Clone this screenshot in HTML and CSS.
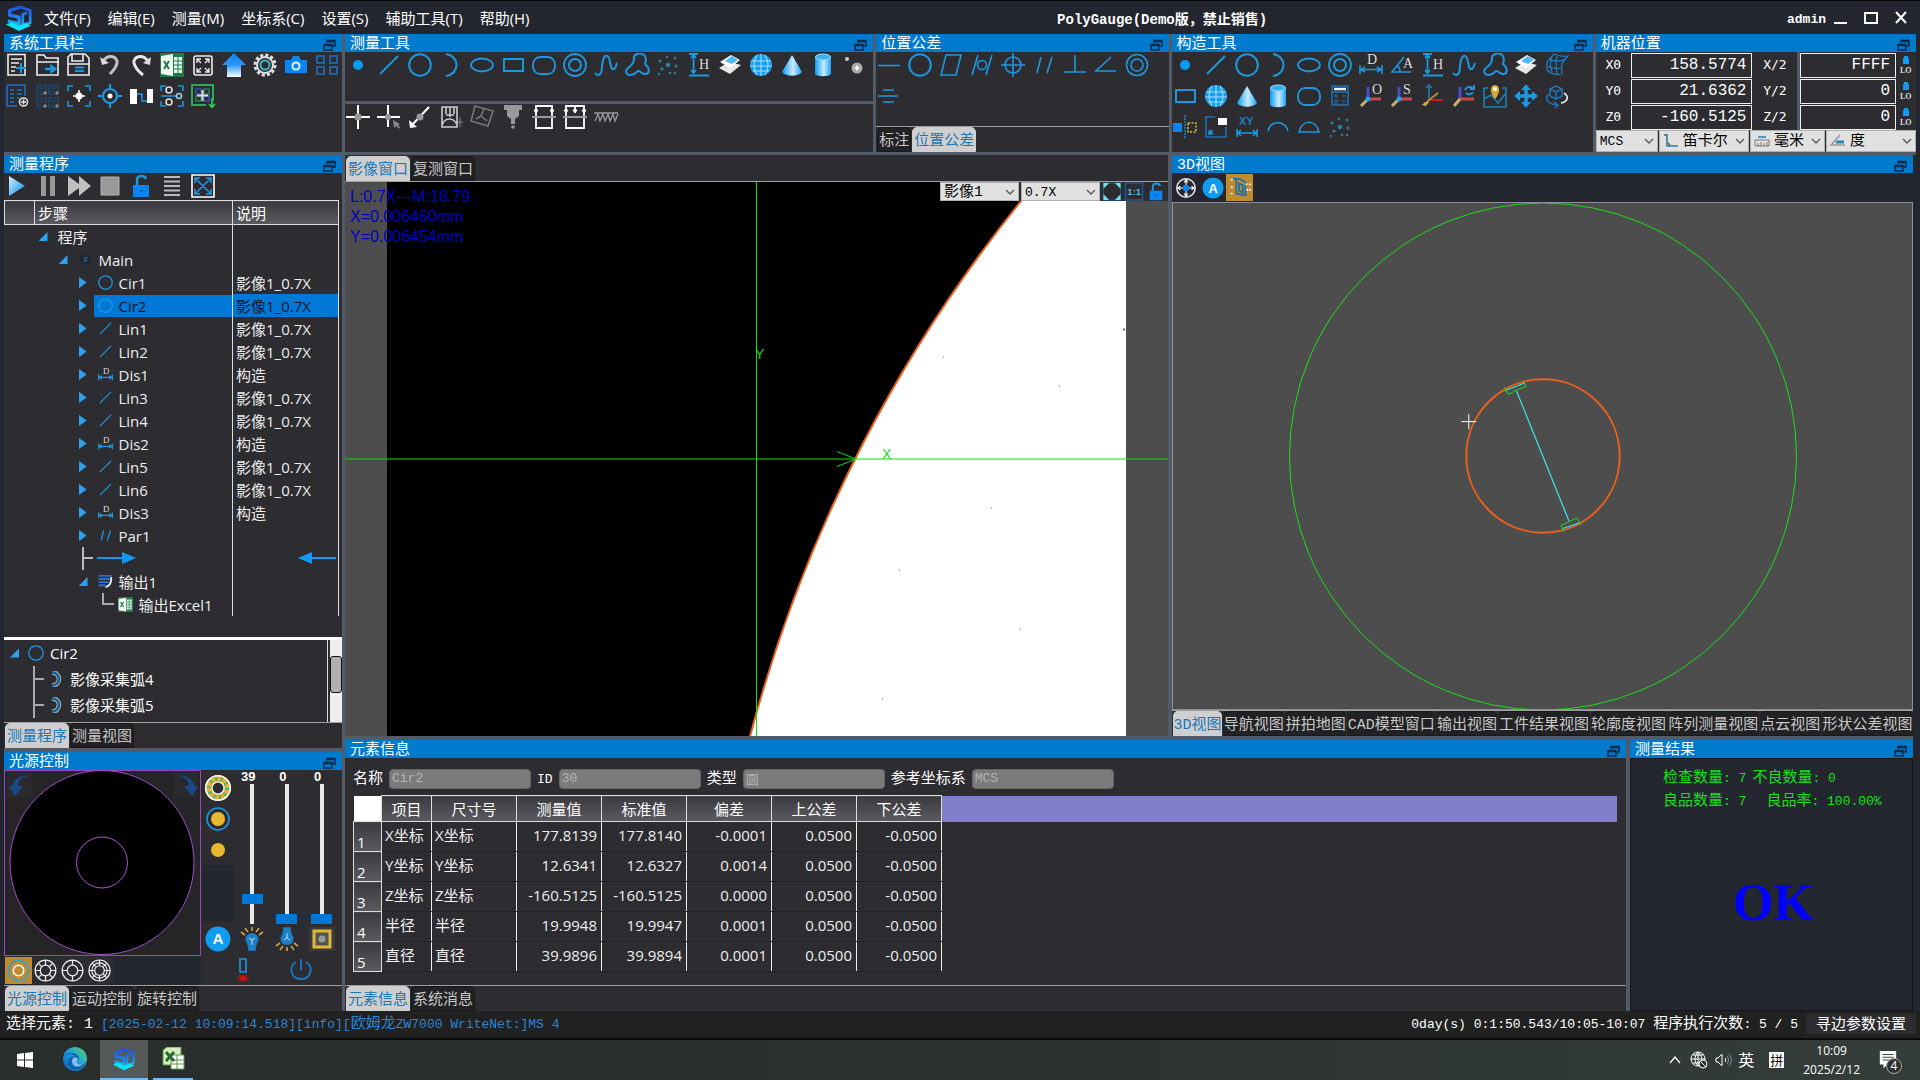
FILE: index.html
```
<!DOCTYPE html>
<html lang="zh-CN">
<head>
    <meta charset="UTF-8">
    <meta name="viewport" content="width=device-width, initial-scale=1.0">
    <title>PolyGauge</title>
    <link rel="stylesheet" href="styles.css">
</head>
<body>
<svg class="defs" aria-hidden="true">
    <defs>
        <linearGradient id="g-ice" x1="0" y1="0" x2="1" y2="0"><stop offset="0" stop-color="#0a9cf5"/><stop offset=".55" stop-color="#c9ebff"/><stop offset="1" stop-color="#1aa3f5"/></linearGradient>
        <linearGradient id="g-up" x1="0" y1="0" x2="0" y2="1"><stop offset="0" stop-color="#0a84f0"/><stop offset=".5" stop-color="#2c96f4"/><stop offset="1" stop-color="#fff"/></linearGradient>
        <linearGradient id="g-logo" gradientUnits="userSpaceOnUse" x1="0" y1="2" x2="0" y2="28"><stop offset="0" stop-color="#1c50e8"/><stop offset=".6" stop-color="#1f8ef0"/><stop offset="1" stop-color="#10e8ff"/></linearGradient>
        <linearGradient id="g-play" x1="0" y1="0" x2="1" y2="1"><stop offset="0" stop-color="#d8f2ff"/><stop offset="1" stop-color="#0088e8"/></linearGradient>
        <linearGradient id="g-edge" x1="0" y1="1" x2="1" y2="0"><stop offset="0" stop-color="#0c59a4"/><stop offset=".5" stop-color="#1b9de2"/><stop offset="1" stop-color="#5fd45e"/></linearGradient>
    </defs>
</svg>
<!-- Iconos -->
<svg class="sprite" aria-hidden="true">
    <symbol id="i-logo" viewBox="0 0 30 30"><path d="M16 3.500 5 7V12L15 14V21L3 18" stroke="url(#g-logo)" stroke-width="3.500"/><path d="M15 3 27 7V20L19 22V11L24 9.500" stroke="url(#g-logo)" stroke-width="2.800"/><path d="M1 22 7 19.500 15 23 23 21 28 23 15 29Z" fill="#10e4fb" stroke="none"/></symbol>
    <symbol id="i-float" viewBox="0 0 13 12"><path d="M4 4V1.500H12V7H9.500M4 2.500H12" stroke-width="1.500"/><path d="M1 5.500H9V11H1ZM1 6.500H9" stroke-width="1.500"/></symbol>
    <symbol id="i-chev" viewBox="0 0 10 10"><path d="M1 3 5 7 9 3" stroke="#555" stroke-width="1.300"/></symbol>
    <symbol id="i-new" viewBox="0 0 24 24"><path d="M3 1.500H20V22H3Z" stroke="#eee"/><path d="M6 6H17M6 10H14M6 14H11M6 18H10" stroke="#eee"/><path d="M16 10V20M11 15H21" stroke-width="2"/></symbol>
    <symbol id="i-open" viewBox="0 0 24 24"><path d="M1 22V2H8L10 5H22V22ZM1 9H23" stroke="#eee"/><path d="M9 16H16" stroke-width="2.500"/><path d="M15 12.500 20 16 15 19.500Z" fill="#1c98e0"/></symbol>
    <symbol id="i-save" viewBox="0 0 24 24"><path d="M1 22V4L4 1H18L22 5V22ZM5 1V8H16V1M1 11H23" stroke="#eee"/><path d="M8 14.500H17M8 18H17" stroke-width="2.200"/></symbol>
    <symbol id="i-undo" viewBox="0 0 24 24"><path d="M5 8C11 0 20 4 19 10 18 15 15 18 12 21" stroke="#c4c4c4" stroke-width="3"/><path d="M2 4 4 12 11 10Z" fill="#ddd" stroke="none"/></symbol>
    <symbol id="i-redo" viewBox="0 0 24 24"><path d="M19 8C13 0 4 4 5 10 6 15 9 18 14 22" stroke="#e6e6e6" stroke-width="3"/><path d="M22 4 21 12 14 10Z" fill="#ddd" stroke="none"/></symbol>
    <symbol id="i-excel" viewBox="0 0 24 24"><path d="M0 0H24V24H0Z" fill="#1f7a48" stroke="none"/><path d="M14 4H22V20H14Z" fill="#e9f5ee" stroke="none"/><path d="M14 8H22M14 12H22M14 16H22M18 4V20" stroke="#1f7a48" stroke-width="1"/><path d="M1 3 13 1V23L1 21Z" fill="#f4f8f5" stroke="none"/><path d="M4 8 9 16M9 8 4 16" stroke="#1f7a48" stroke-width="2"/></symbol>
    <symbol id="i-full" viewBox="0 0 24 24"><rect x="3" y="3" width="18" height="19" rx="2" stroke="#eee"/><path d="M6 10V6H10M14 6H18V10M18 15V19H14M10 19H6V15M6 6 10 10M18 6 14 10M18 19 14 15M6 19 10 15" stroke="#eee" stroke-width="1.300"/></symbol>
    <symbol id="i-up" viewBox="0 0 24 24"><path d="M12 0 24 12H19V24H5V12H0Z" fill="url(#g-up)" stroke="none"/></symbol>
    <symbol id="i-gear" viewBox="0 0 24 24"><circle cx="12" cy="12" r="10" stroke="#ddd" stroke-width="3" stroke-dasharray="3.200 2.030"/><circle cx="12" cy="12" r="8" stroke="#ddd" stroke-width="2"/><circle cx="12" cy="12" r="4.500" stroke="#3eb4c4" stroke-width="2"/></symbol>
    <symbol id="i-camera" viewBox="0 0 24 24"><path d="M1 7H7L9 3H15L17 7H23V20H1Z" fill="#0a84f0" stroke="none"/><circle cx="12" cy="13" r="4.500" fill="#dff" stroke="none"/><circle cx="12" cy="13" r="2.600" fill="#0a84f0" stroke="none"/></symbol>
    <symbol id="i-grid" viewBox="0 0 24 24"><path d="M2 3H9V10H2ZM15 3H22V10H15ZM2 14H9V21H2ZM15 14H22V21H15Z" stroke="#1b72c4"/></symbol>
    <symbol id="i-report" viewBox="0 0 24 24"><path d="M2 1H20V12M2 1V22H12M5 6H9M12 6H17M5 10H9M12 10H17M5 14H9M12 14H15M5 18H9" stroke="#1b72c4"/><circle cx="18.500" cy="18" r="4" stroke="#ddd"/><path d="M18.500 15.500V20.500M16 18H21" stroke="#ddd"/></symbol>
    <symbol id="i-reports" viewBox="0 0 24 24"><path d="M1 1H10V10H1ZM13 1H22V10H13ZM1 14H10V23H1ZM13 14H22V23H13ZM3 4H8M3 7H6M15 4H20M15 7H18M3 17H8M3 20H6M15 17H20M15 20H18" stroke="#1d5384" stroke-width="1.200"/><path d="M8 8h2v2H8ZM20 8h2v2H20ZM8 21h2v2H8ZM20 21h2v2H20Z" stroke="#999" stroke-width="1"/></symbol>
    <symbol id="i-focus" viewBox="0 0 24 24"><path d="M1 7V2H6M18 2H23V7M23 17V22H18M6 22H1V17"/><circle cx="12" cy="12" r="3.500" fill="#fff" stroke="none"/><path d="M12 6V18M6 12H18" stroke="#fff"/></symbol>
    <symbol id="i-target" viewBox="0 0 24 24"><circle cx="12" cy="12" r="7" stroke-width="2.200"/><circle cx="12" cy="12" r="2.500" fill="#fff" stroke="none"/><path d="M12 0V6M12 18V24M0 12H6M18 12H24" stroke-width="2.200"/></symbol>
    <symbol id="i-step" viewBox="0 0 24 24"><path d="M1 5H8V20H1ZM18 5H24V19H18Z" fill="#fff" stroke="none"/><path d="M8 10H13V17H18"/></symbol>
    <symbol id="i-scan" viewBox="0 0 24 24"><path d="M1 7V2H6M18 2H23V7M23 17V22H18M6 22H1V17M1 12H16"/><circle cx="9" cy="6" r="3" stroke="#ddd"/><circle cx="9" cy="18" r="3" stroke="#ddd"/><circle cx="19" cy="12" r="2.500" stroke="#9cd"/></symbol>
    <symbol id="i-addgrid" viewBox="0 0 24 24"><path d="M15 21H1V1H22V17" stroke="#2bab5a" stroke-width="2"/><path d="M5 5H10V10H5ZM13 12H18V17H13Z" stroke="#3b4bb0"/><path d="M13 5H18V10H13ZM5 12H10V17H5Z" stroke="#2a7a54"/><path d="M11.500 6V17M6 11.500H17" stroke="#ddd" stroke-width="2"/><path d="M21 14V23M18 20 21 23.500 24 20" stroke="#2bd05a"/></symbol>

    <symbol id="i-point" viewBox="0 0 24 24"><circle cx="12" cy="12" r="5" fill="#0a9cf5" stroke="none"/></symbol>
    <symbol id="i-line" viewBox="0 0 24 24"><path d="M3 21 21 3" stroke-width="2"/></symbol>
    <symbol id="i-circle" viewBox="0 0 24 24"><circle cx="12" cy="12" r="10.800" stroke-width="2"/></symbol>
    <symbol id="i-arc" viewBox="0 0 24 24"><path d="M7 1C21 3 21 21 7 23" stroke-width="2"/></symbol>
    <symbol id="i-ellipse" viewBox="0 0 24 24"><ellipse cx="12" cy="12" rx="11" ry="6.500" stroke-width="1.800"/></symbol>
    <symbol id="i-rect" viewBox="0 0 24 24"><rect x="3" y="6" width="19" height="12" stroke-width="2"/></symbol>
    <symbol id="i-slot" viewBox="0 0 24 24"><rect x="1" y="4" width="22" height="17" rx="7.500" stroke-width="1.800"/></symbol>
    <symbol id="i-ring" viewBox="0 0 24 24"><circle cx="12" cy="12" r="11" stroke-width="1.800"/><circle cx="12" cy="12" r="6" stroke-width="2"/></symbol>
    <symbol id="i-curve" viewBox="0 0 24 24"><path d="M1 20C4 24 8 22 8 13 9 4 12 0 15 5 17 10 16 17 20 16 22 15 22 12 23 10" stroke-width="2"/></symbol>
    <symbol id="i-cloud" viewBox="0 0 24 24"><path d="M9 6C8 1 15-1 19 2 23 5 20 9 20 11 25 15 25 21 20 21 16 21 15 17 13 18 9 22 3 24 1 19 0 14 9 14 9 6Z" stroke-width="2"/></symbol>
    <symbol id="i-dots" viewBox="0 0 24 24"><g stroke="none" fill="#2a83a0"><circle cx="12" cy="12" r="2.300"/><circle cx="4" cy="8" r="1.500"/><circle cx="19" cy="5" r="1.300"/><circle cx="20" cy="13" r="1.500"/><circle cx="6" cy="16" r="1.500"/><circle cx="14" cy="20" r="1.300"/><circle cx="3" cy="21" r="1.200"/><circle cx="11" cy="4" r="1.200"/><circle cx="19" cy="20" r="1.200"/></g></symbol>
    <symbol id="i-height" viewBox="0 0 24 24"><path d="M2 1H11M6.500 2V20M4 5 6.500 2 9 5M4 17 6.500 20 9 17M2 22.500H22" stroke-width="1.800"/><text x="12" y="16" class="t-serif">H</text></symbol>
    <symbol id="i-plane" viewBox="0 0 24 24"><path d="M1 15 11 9 23 12 12 21Z" fill="#e8e8e8" stroke="none"/><path d="M2 9 13 2 22 7 12 15Z" fill="#fff" stroke="none"/><path d="M7 8 14 3 20 7 14 11Z" fill="#4db8f5" stroke="none"/></symbol>
    <symbol id="i-globe" viewBox="0 0 24 24"><circle cx="12" cy="12" r="11" fill="#169ef2" stroke="none"/><path d="M2 8H22M1 13H23M4 18H20M12 1V23M8 2C4 8 4 16 8 22M16 2C20 8 20 16 16 22" stroke="#a8def9" stroke-width="1.100"/></symbol>
    <symbol id="i-cone" viewBox="0 0 24 24"><path d="M12 2 22 19C18 24 6 24 2 19Z" fill="url(#g-ice)" stroke="none"/></symbol>
    <symbol id="i-cyl" viewBox="0 0 24 24"><path d="M4 4C6 0 18 0 20 4V21C18 24 6 24 4 21Z" fill="url(#g-ice)" stroke="none"/><ellipse cx="12" cy="4" rx="7.500" ry="3" fill="#35aef5" stroke="#9ddcfb" stroke-width="1"/></symbol>
    <symbol id="i-more" viewBox="0 0 24 24"><circle cx="5" cy="6" r="2" fill="#ccc" stroke="none"/><circle cx="15" cy="15" r="5.500" fill="#aaa" stroke="none"/><path d="M15 12.500V17.500M12.500 15H17.500" stroke="#fff"/></symbol>

    <symbol id="i-cross" viewBox="0 0 24 24"><path d="M12 0V24M0 12H24" stroke="#fff" stroke-width="2"/><circle cx="12" cy="12" r="3.500" fill="#999" stroke="none"/></symbol>
    <symbol id="i-crosspick" viewBox="0 0 24 24"><path d="M11 0V22M0 12H23" stroke="#fff" stroke-width="2"/><circle cx="11" cy="12" r="3" fill="#999" stroke="none"/><path d="M16 15 17 23 19 21 22 24 23 22 21 20 23 19Z" fill="#888" stroke="none"/></symbol>
    <symbol id="i-probe" viewBox="0 0 24 24"><path d="M21 2 4 20" stroke="#fff" stroke-width="2"/><circle cx="12" cy="12" r="3.500" fill="#999" stroke="none"/><path d="M1 15 2 23 9 22Z" fill="#fff" stroke="none"/></symbol>
    <symbol id="i-box1" viewBox="0 0 24 24"><path d="M3 2H18V22H3ZM7 2V9M11 2V12M15 2V9M7 10H15M3 20C6 12 15 12 18 20" stroke="#ccc"/><path d="M21 12V22M19 17H24" stroke="#888" stroke-width="1"/></symbol>
    <symbol id="i-box2" viewBox="0 0 24 24"><path d="M5 1 23 6 18 21 1 16ZM6 14 11 11 14 4M11 11 17 16" stroke="#777"/></symbol>
    <symbol id="i-drill" viewBox="0 0 24 24"><path d="M3 0H21V5H18V11L14 14V19H10V14L6 11V5H3Z" fill="#999" stroke="none"/><circle cx="12" cy="22" r="1.800" fill="#999" stroke="none"/></symbol>
    <symbol id="i-frame" viewBox="0 0 24 24"><path d="M4 1H20V23H4ZM4 1V7M20 1V7" stroke="#fff" stroke-width="1.800"/><path d="M0 12H24" stroke="#999" stroke-width="2"/><path d="M2 5H6L4 8ZM18 5H22L20 8Z" fill="#fff" stroke="#fff" stroke-width="1"/></symbol>
    <symbol id="i-frame2" viewBox="0 0 24 24"><path d="M3 1H21V23H3ZM12 1V7" stroke="#fff" stroke-width="1.800"/><path d="M0 12H24" stroke="#999" stroke-width="2"/><path d="M1 5H5L3 8ZM10 5H14L12 8ZM19 5H23L21 8Z" fill="#fff" stroke="#fff" stroke-width="1"/></symbol>
    <symbol id="i-wave" viewBox="0 0 24 24"><path d="M0 8H24M1 16 4 9 6 16 9 9 11 16 14 9 16 16 19 9 21 16 24 9" stroke="#999" stroke-width="1.300"/></symbol>

    <symbol id="i-hline" viewBox="0 0 24 24"><path d="M1 12.500H23"/></symbol>
    <symbol id="i-para" viewBox="0 0 24 24"><path d="M7 2H22L17 22H2Z"/></symbol>
    <symbol id="i-cylin" viewBox="0 0 24 24"><circle cx="12" cy="12" r="4.500"/><path d="M2 22 8 2M16 22 22 2"/></symbol>
    <symbol id="i-pos" viewBox="0 0 24 24"><circle cx="12" cy="12" r="8"/><path d="M12 0V24M0 12H24"/></symbol>
    <symbol id="i-parallel" viewBox="0 0 24 24"><path d="M5 20 9 4M15 20 20 4"/></symbol>
    <symbol id="i-perp" viewBox="0 0 24 24"><path d="M12 2V19M1 19H23"/></symbol>
    <symbol id="i-angle" viewBox="0 0 24 24"><path d="M17 4 2 18H22"/></symbol>
    <symbol id="i-conc" viewBox="0 0 24 24"><circle cx="12" cy="12" r="10.500"/><circle cx="12" cy="12" r="6"/></symbol>
    <symbol id="i-sym" viewBox="0 0 24 24"><path d="M6 6H17M1 12H21M6 18H17"/></symbol>

    <symbol id="i-dist" viewBox="0 0 24 24"><path d="M1 12V21M23 12V21M2 16.500H22M6 14 2 16.500 6 19M18 14 22 16.500 18 19"/><text x="8" y="11" class="t-serif">D</text></symbol>
    <symbol id="i-ang" viewBox="0 0 24 24"><path d="M14 4 2 19H21M7 13C10 14 10 17 10 19"/><text x="13" y="15" class="t-serif">A</text></symbol>
    <symbol id="i-mesh" viewBox="0 0 24 24"><path d="M2 9 9 1C14 3 18 4 23 3L17 10C16 13 17 17 17 21 11 22 5 20 2 17ZM4 6C10 9 15 9 20 6M2 13C8 16 12 16 17 15M7 3C5 8 5 14 7 19M12 3C10 9 11 15 12 21" stroke="#1b80c4" stroke-width="1.200"/></symbol>
    <symbol id="i-calc" viewBox="0 0 24 24"><path d="M4 2H20V21H4ZM4 8H20" stroke="#1b72b8"/><path d="M6 5H18" stroke="#eee" stroke-width="2.500"/><path d="M6 12H10M8 10V14M14 12H18M6 16 10 20M10 16 6 20M14 17H18M14 20H18" stroke="#1b72b8" stroke-width="1.200"/></symbol>
    <symbol id="i-axo" viewBox="0 0 24 24"><path d="M9 15V3" stroke="#4450c8" stroke-width="3"/><path d="M9 15H22" stroke="#c84848" stroke-width="3"/><path d="M9 15 2 22" stroke="#c8b070" stroke-width="3"/><circle cx="9" cy="15" r="2.500" fill="#1aa3f5" stroke="none"/><text x="13" y="10" class="t-serif">O</text></symbol>
    <symbol id="i-axs" viewBox="0 0 24 24"><path d="M9 15V3" stroke="#4450c8" stroke-width="3"/><path d="M9 15H22" stroke="#c84848" stroke-width="3"/><path d="M9 15 2 22" stroke="#c8b070" stroke-width="3"/><circle cx="9" cy="15" r="2.500" fill="#1aa3f5" stroke="none"/><text x="13" y="10" class="t-serif">S</text></symbol>
    <symbol id="i-axp" viewBox="0 0 24 24"><path d="M8 16V1M5 4 8 1 11 4" stroke="#1b80a8"/><path d="M8 16H22" stroke="#d01818" stroke-width="2"/><path d="M8 16 17 9M8 16 3 21" stroke="#b08a30" stroke-width="2"/><path d="M1 21 4 18H8L5 22Z" fill="#c8a848" stroke="none"/></symbol>
    <symbol id="i-axr" viewBox="0 0 24 24"><path d="M8 15V3" stroke="#4450c8" stroke-width="3"/><path d="M8 15H22" stroke="#c84848" stroke-width="3"/><path d="M8 15 2 22" stroke="#c8b070" stroke-width="3"/><path d="M13 6C15 2 19 2 21 5M22 1V5H18M21 8C19 11 16 11 14 9" stroke-width="2"/></symbol>
    <symbol id="i-map" viewBox="0 0 24 24"><path d="M5 4H1V23H23V4H19M1 15 8 11 15 19 23 9" stroke="#1b80b8"/><path d="M12 15C6 8 7 1 12 1S18 8 12 15Z" fill="#d8a830" stroke="none"/><circle cx="12" cy="5" r="2" fill="#fff" stroke="none"/></symbol>
    <symbol id="i-move" viewBox="0 0 24 24"><path d="M12 2V22M2 12H22" stroke-width="3.500"/><path d="M12 0 17 6H7ZM12 24 17 18H7ZM0 12 6 7V17ZM24 12 18 7V17Z" fill="#1c98e0" stroke="none"/></symbol>
    <symbol id="i-rot" viewBox="0 0 24 24"><path d="M11 2 17 5V12L11 15 5 12V5ZM5 5 11 8 17 5M11 8V15" stroke="#1b72b8"/><path d="M4 10C-1 14 2 20 12 21M9 18 13 21 10 24" stroke="#1b72b8"/><path d="M19 9C25 13 22 18 16 19" stroke="#eee"/></symbol>
    <symbol id="i-mirror" viewBox="0 0 24 24"><path d="M0 8H9V17H0Z" fill="#0a84f0" stroke="none"/><path d="M12 0V24" stroke="#1b80b8" stroke-dasharray="2 1"/><path d="M15 8H23V17H15Z" stroke="#c8b848" stroke-dasharray="2 1.500"/></symbol>
    <symbol id="i-scale" viewBox="0 0 24 24"><path d="M11 2H2V22H22V12M5 19 9 15" stroke="#1b72b8"/><path d="M4 20 5 14 10 19Z" fill="#1c98e0" stroke="none"/><path d="M14 3H23V10H14Z" fill="#fff" stroke="none"/></symbol>
    <symbol id="i-xy" viewBox="0 0 24 24"><text x="4" y="10" class="t-xy">XY</text><path d="M2 14V22M22 14V22M3 18H21M6 15 3 18 6 21M18 15 21 18 18 21"/></symbol>
    <symbol id="i-arch" viewBox="0 0 24 24"><path d="M2 16C5 5 19 5 22 16"/></symbol>
    <symbol id="i-dome" viewBox="0 0 24 24"><path d="M2 17C5 4 19 4 22 17Z"/></symbol>

    <symbol id="i-play" viewBox="0 0 24 24"><path d="M4 2 20 12 4 22Z" fill="url(#g-play)" stroke="none"/></symbol>
    <symbol id="i-pause" viewBox="0 0 24 24"><path d="M5 2H10V22H5ZM14 2H19V22H14Z" fill="#999" stroke="none"/></symbol>
    <symbol id="i-ff" viewBox="0 0 24 24"><path d="M1 2 12 10V2L24 12 12 22V14L1 22Z" fill="#c0c0c0" stroke="none"/></symbol>
    <symbol id="i-stop" viewBox="0 0 24 24"><path d="M3 3H21V21H3Z" fill="#999" stroke="#b5b5b5" stroke-width="1"/></symbol>
    <symbol id="i-lock" viewBox="0 0 24 24"><path d="M4 11H20V23H4Z" fill="#0a84f0" stroke="none"/><path d="M8 11V5C9 1 16 1 17 5" stroke-width="2.500"/><path d="M11 16H14L12.500 18Z" fill="#073a70" stroke="none"/></symbol>
    <symbol id="i-list" viewBox="0 0 24 24"><path d="M4 3H20M4 7.500H20M4 12H20M4 16.500H20M4 21H20" stroke="#bbb" stroke-width="1.800"/></symbol>
    <symbol id="i-expand" viewBox="0 0 24 24"><path d="M1 1H23V23H1Z" stroke="#fff"/><path d="M4 4 20 20M20 4 4 20M4 9V4H9M15 4H20V9M20 15V20H15M9 20H4V15"/></symbol>
    <symbol id="i-out" viewBox="0 0 24 24"><path d="M1 3H22M1 8H20M1 13H18M1 18H12" stroke="#2a72c8" stroke-width="3"/><path d="M21 5C22 14 19 19 12 21" stroke="#eee" stroke-width="3"/></symbol>
    <symbol id="i-darc" viewBox="0 0 24 24"><path d="M6 2C20 3 20 21 6 22" stroke="#aaa" stroke-width="7"/><path d="M6 2C20 3 20 21 6 22" stroke="#16639c" stroke-width="4"/></symbol>
    <symbol id="i-sub" viewBox="0 0 24 24"><circle cx="12" cy="12" r="8" fill="#232428" stroke="none"/><path d="M8 15C12 17 12 12 12 12S12 7 16 9M8 11 12 9M12 15 16 13" stroke="#1b6090"/></symbol>

    <symbol id="i-wheel" viewBox="0 0 24 24"><circle cx="12" cy="12" r="10" stroke="#ddd" stroke-width="1.800"/><path d="M12 3V21M3 12H21M10 6 12 3 14 6M10 18 12 21 14 18M6 10 3 12 6 14M18 10 21 12 18 14" stroke="#eee" stroke-width="1.300"/><circle cx="12" cy="12" r="3.500" fill="#0a84f0" stroke="none"/></symbol>
    <symbol id="i-auto" viewBox="0 0 24 24"><circle cx="12" cy="12" r="11.500" fill="#109cf0" stroke="none"/><text x="7" y="17" class="t-a">A</text></symbol>
    <symbol id="i-door" viewBox="0 0 24 24"><path d="M6 2H12L18 6V20L8 18V4ZM11 7 15 9V17L11 15Z" stroke="#1b72a8" stroke-width="2"/><g fill="#eee" stroke="none"><circle cx="3" cy="3" r="1.200"/><circle cx="3" cy="11" r="1.200"/><circle cx="3" cy="18" r="1.200"/><circle cx="19" cy="8" r="1.200"/><circle cx="23" cy="8" r="1.200"/><circle cx="20" cy="14" r="1.200"/><circle cx="23" cy="14" r="1.200"/></g></symbol>
    <symbol id="i-fit" viewBox="0 0 20 20"><path d="M1 1H19V19H1Z" stroke="#1b5a90" stroke-width="1"/><path d="M1 1H7L1 7ZM19 1V7L13 1ZM19 19H13L19 13ZM1 19V13L7 19Z" fill="#6fe4f0" stroke="none"/></symbol>
    <symbol id="i-one" viewBox="0 0 20 20"><path d="M1 1H19V19H1Z" stroke="#1b5a90"/><text x="3" y="14" class="t-one">1:1</text></symbol>
    <symbol id="i-lo" viewBox="0 0 16 20"><path d="M5 3H11V9H5ZM6 1H10V3H6Z" fill="#109cf0" stroke="none"/><text x="2" y="18" class="t-lo">LO</text></symbol>
    <symbol id="i-cart" viewBox="0 0 16 16"><path d="M4 1V13H15" stroke="#2a78a0"/><path d="M1 2H3M7 12 5 10" stroke="#555"/></symbol>
    <symbol id="i-ruler" viewBox="0 0 16 16"><path d="M1 7H15V13H1ZM4 10V13M7 9V13M10 10V13M13 9V13" stroke="#777" stroke-width="1"/><path d="M4 4H12" stroke="#2a88b0"/></symbol>
    <symbol id="i-deg" viewBox="0 0 16 16"><path d="M10 2 1 12H15" stroke="#999"/><path d="M6 9H14" stroke="#2a88b0" stroke-width="3"/></symbol>

    <symbol id="i-ringa" viewBox="0 0 26 26"><circle cx="13" cy="13" r="9.500" stroke="#e0b030" stroke-width="7"/><circle cx="13" cy="13" r="9.500" stroke="#30b890" stroke-width="5" stroke-dasharray="1.600 4.370"/><circle cx="13" cy="13" r="12.200" stroke="#fff"/><circle cx="13" cy="13" r="6" stroke="#fff" stroke-width="1.200"/></symbol>
    <symbol id="i-ringb" viewBox="0 0 26 26"><circle cx="13" cy="13" r="11"/><circle cx="13" cy="13" r="7" fill="#e8b830" stroke="none"/></symbol>
    <symbol id="i-ringc" viewBox="0 0 26 26"><circle cx="13" cy="13" r="7" fill="#e8b830" stroke="none"/></symbol>
    <symbol id="i-seg1" viewBox="0 0 24 24"><circle cx="12" cy="12" r="10.500" stroke="#3aa0c8"/><circle cx="12" cy="12" r="5.500" stroke="#fff"/></symbol>
    <symbol id="i-seg8" viewBox="0 0 24 24"><g stroke="#eee" stroke-width="1.300"><circle cx="12" cy="12" r="10.800"/><circle cx="12" cy="12" r="5.500"/><path d="M12 1V6.500M12 17.500V23M1 12H6.500M17.500 12H23M4.500 4.500 8 8M16 16 19.500 19.500M4.500 19.500 8 16M16 8 19.500 4.500"/></g></symbol>
    <symbol id="i-seg4" viewBox="0 0 24 24"><g stroke="#eee" stroke-width="1.300"><circle cx="12" cy="12" r="10.800"/><circle cx="12" cy="12" r="5.500"/><path d="M12 1V6.500M12 17.500V23M1 12H6.500M17.500 12H23"/></g></symbol>
    <symbol id="i-seg16" viewBox="0 0 24 24"><g stroke="#eee" stroke-width="1.200"><circle cx="12" cy="12" r="11"/><circle cx="12" cy="12" r="8"/><circle cx="12" cy="12" r="5"/><path d="M12 1V7M12 17V23M1 12H7M17 12H23M4.500 4.500 8 8M16 16 19.500 19.500M4.500 19.500 8 16M16 8 19.500 4.500"/></g></symbol>
    <symbol id="i-bulb" viewBox="0 0 24 24"><path d="M12 7C18 7 19 13 16 16V18H8V16C5 13 6 7 12 7ZM9 19H15V23H9Z" fill="#1b80c8" stroke="#1b80c8"/><path d="M12 18V13L9 11M12 13 15 11" stroke="#cde" stroke-width="1"/><path d="M1 5 5 8M5 1 8 5M12 0V4M19 1 16 5M23 5 19 8" stroke="#c8a848"/></symbol>
    <symbol id="i-bulbd" viewBox="0 0 24 24"><path d="M12 17C18 17 19 11 16 8V6H8V8C5 11 6 17 12 17ZM9 5H15V1H9Z" fill="#1b80c8" stroke="#1b80c8"/><path d="M12 6V11L9 13M12 11 15 13" stroke="#cde" stroke-width="1"/><path d="M1 19 5 16M5 23 8 19M12 24V20M19 23 16 19M23 19 19 16" stroke="#c8a848"/></symbol>
    <symbol id="i-coax" viewBox="0 0 26 24"><path d="M0 0H26V24H0Z" fill="#3a3a3a" stroke="none"/><path d="M5 4H21V20H5Z" fill="#55554c" stroke="#e0b838" stroke-width="3"/><circle cx="13" cy="12" r="3.500" fill="#999" stroke="none"/></symbol>
    <symbol id="i-laser" viewBox="0 0 16 24"><path d="M5 1H11V14H5Z"/><path d="M8 16V24M2 20H14M4 17 12 23M12 17 4 23" stroke="#d01010" stroke-width="1.400"/></symbol>
    <symbol id="i-power" viewBox="0 0 24 24"><path d="M7 4C-1 9 2 21 12 21S25 9 17 4M12 1V12" stroke="#1b72b8" stroke-width="2"/></symbol>
</svg>

<header class="titlebar">
    <svg class="logo"><use href="#i-logo"/></svg>
    <nav class="menu">
        <a href="#">文件(F)</a><a href="#">编辑(E)</a><a href="#">测量(M)</a><a href="#">坐标系(C)</a><a href="#">设置(S)</a><a href="#">辅助工具(T)</a><a href="#">帮助(H)</a>
    </nav>
    <h1>PolyGauge(Demo版，禁止销售)</h1>
    <div class="window-buttons">
        <span class="user">admin</span>
        <button aria-label="最小化"><svg class="win" viewBox="0 0 14 14"><path d="M0 12H13"/></svg></button>
        <button aria-label="最大化"><svg class="win" viewBox="0 0 14 14"><path d="M1 2H13V12H1Z"/></svg></button>
        <button aria-label="关闭"><svg class="win" viewBox="0 0 14 14"><path d="M2 1 12 12M12 1 2 12"/></svg></button>
    </div>
</header>

<main class="workspace">
    <div class="top-row">
        <section class="panel">
            <h2>系统工具栏<svg class="float"><use href="#i-float"/></svg></h2>
            <div class="tools">
                <button aria-label="新建"><svg><use href="#i-new"/></svg></button>
                <button aria-label="打开"><svg><use href="#i-open"/></svg></button>
                <button aria-label="保存"><svg><use href="#i-save"/></svg></button>
                <button aria-label="撤销"><svg><use href="#i-undo"/></svg></button>
                <button aria-label="重做"><svg><use href="#i-redo"/></svg></button>
                <button aria-label="Excel"><svg><use href="#i-excel"/></svg></button>
                <button aria-label="全屏"><svg><use href="#i-full"/></svg></button>
                <button aria-label="回零"><svg><use href="#i-up"/></svg></button>
                <button aria-label="设置"><svg><use href="#i-gear"/></svg></button>
                <button aria-label="拍照"><svg><use href="#i-camera"/></svg></button>
                <button aria-label="阵列"><svg><use href="#i-grid"/></svg></button>
                <button aria-label="报表"><svg><use href="#i-report"/></svg></button>
                <button aria-label="多报表"><svg><use href="#i-reports"/></svg></button>
                <button aria-label="对焦"><svg><use href="#i-focus"/></svg></button>
                <button aria-label="定位"><svg><use href="#i-target"/></svg></button>
                <button aria-label="步进"><svg><use href="#i-step"/></svg></button>
                <button aria-label="扫描"><svg><use href="#i-scan"/></svg></button>
                <button aria-label="添加"><svg><use href="#i-addgrid"/></svg></button>
            </div>
        </section>

        <section class="panel">
            <h2>测量工具<svg class="float"><use href="#i-float"/></svg></h2>
            <div class="tools measure">
                <button aria-label="点"><svg><use href="#i-point"/></svg></button>
                <button aria-label="线"><svg><use href="#i-line"/></svg></button>
                <button aria-label="圆"><svg><use href="#i-circle"/></svg></button>
                <button aria-label="弧"><svg><use href="#i-arc"/></svg></button>
                <button aria-label="椭圆"><svg><use href="#i-ellipse"/></svg></button>
                <button aria-label="矩形"><svg><use href="#i-rect"/></svg></button>
                <button aria-label="键槽"><svg><use href="#i-slot"/></svg></button>
                <button aria-label="圆环"><svg><use href="#i-ring"/></svg></button>
                <button aria-label="曲线"><svg><use href="#i-curve"/></svg></button>
                <button aria-label="闭合曲线"><svg><use href="#i-cloud"/></svg></button>
                <button aria-label="点云"><svg><use href="#i-dots"/></svg></button>
                <button aria-label="高度"><svg><use href="#i-height"/></svg></button>
                <button aria-label="平面"><svg><use href="#i-plane"/></svg></button>
                <button aria-label="球"><svg><use href="#i-globe"/></svg></button>
                <button aria-label="圆锥"><svg><use href="#i-cone"/></svg></button>
                <button aria-label="圆柱"><svg><use href="#i-cyl"/></svg></button>
                <button aria-label="自动"><svg><use href="#i-more"/></svg></button>
            </div>
            <div class="tools second">
                <button aria-label="十字"><svg><use href="#i-cross"/></svg></button>
                <button aria-label="十字拾取"><svg><use href="#i-crosspick"/></svg></button>
                <button aria-label="寻边"><svg><use href="#i-probe"/></svg></button>
                <button aria-label="框选"><svg><use href="#i-box1"/></svg></button>
                <button aria-label="区域"><svg><use href="#i-box2"/></svg></button>
                <button aria-label="探针"><svg><use href="#i-drill"/></svg></button>
                <button aria-label="双边"><svg><use href="#i-frame"/></svg></button>
                <button aria-label="多边"><svg><use href="#i-frame2"/></svg></button>
                <button aria-label="齿形"><svg><use href="#i-wave"/></svg></button>
            </div>
        </section>

        <section class="panel">
            <h2>位置公差<svg class="float"><use href="#i-float"/></svg></h2>
            <div class="tools">
                <button aria-label="直线度"><svg><use href="#i-hline"/></svg></button>
                <button aria-label="圆度"><svg><use href="#i-circle"/></svg></button>
                <button aria-label="平面度"><svg><use href="#i-para"/></svg></button>
                <button aria-label="圆柱度"><svg><use href="#i-cylin"/></svg></button>
                <button aria-label="位置度"><svg><use href="#i-pos"/></svg></button>
                <button aria-label="平行度"><svg><use href="#i-parallel"/></svg></button>
                <button aria-label="垂直度"><svg><use href="#i-perp"/></svg></button>
                <button aria-label="倾斜度"><svg><use href="#i-angle"/></svg></button>
                <button aria-label="同心度"><svg><use href="#i-conc"/></svg></button>
                <button aria-label="对称度"><svg><use href="#i-sym"/></svg></button>
            </div>
            <div class="tabs"><button>标注</button><button class="active">位置公差</button></div>
        </section>

        <section class="panel">
            <h2>构造工具<svg class="float"><use href="#i-float"/></svg></h2>
            <div class="tools">
                <button aria-label="点"><svg><use href="#i-point"/></svg></button>
                <button aria-label="线"><svg><use href="#i-line"/></svg></button>
                <button aria-label="圆"><svg><use href="#i-circle"/></svg></button>
                <button aria-label="弧"><svg><use href="#i-arc"/></svg></button>
                <button aria-label="椭圆"><svg><use href="#i-ellipse"/></svg></button>
                <button aria-label="圆环"><svg><use href="#i-ring"/></svg></button>
                <button aria-label="距离"><svg><use href="#i-dist"/></svg></button>
                <button aria-label="角度"><svg><use href="#i-ang"/></svg></button>
                <button aria-label="高度"><svg><use href="#i-height"/></svg></button>
                <button aria-label="曲线"><svg><use href="#i-curve"/></svg></button>
                <button aria-label="闭合曲线"><svg><use href="#i-cloud"/></svg></button>
                <button aria-label="平面"><svg><use href="#i-plane"/></svg></button>
                <button aria-label="曲面"><svg><use href="#i-mesh"/></svg></button>
                <button aria-label="矩形"><svg><use href="#i-rect"/></svg></button>
                <button aria-label="球"><svg><use href="#i-globe"/></svg></button>
                <button aria-label="圆锥"><svg><use href="#i-cone"/></svg></button>
                <button aria-label="圆柱"><svg><use href="#i-cyl"/></svg></button>
                <button aria-label="键槽"><svg><use href="#i-slot"/></svg></button>
                <button aria-label="计算"><svg><use href="#i-calc"/></svg></button>
                <button aria-label="原点"><svg><use href="#i-axo"/></svg></button>
                <button aria-label="坐标系"><svg><use href="#i-axs"/></svg></button>
                <button aria-label="平移坐标"><svg><use href="#i-axp"/></svg></button>
                <button aria-label="旋转坐标"><svg><use href="#i-axr"/></svg></button>
                <button aria-label="地图"><svg><use href="#i-map"/></svg></button>
                <button aria-label="移动"><svg><use href="#i-move"/></svg></button>
                <button aria-label="旋转"><svg><use href="#i-rot"/></svg></button>
                <button aria-label="镜像"><svg><use href="#i-mirror"/></svg></button>
                <button aria-label="缩放"><svg><use href="#i-scale"/></svg></button>
                <button aria-label="XY距离"><svg><use href="#i-xy"/></svg></button>
                <button aria-label="弧构造"><svg><use href="#i-arch"/></svg></button>
                <button aria-label="弓形"><svg><use href="#i-dome"/></svg></button>
                <button aria-label="点云"><svg><use href="#i-dots"/></svg></button>
            </div>
        </section>

        <section class="panel machine">
            <h2>机器位置<svg class="float"><use href="#i-float"/></svg></h2>
            <div class="axes">
                <label for="x0">X0</label><input id="x0" value="158.5774" readonly><label class="half" for="x2">X/2</label><input id="x2" value="FFFF" readonly><svg><use href="#i-lo"/></svg>
                <label for="y0">Y0</label><input id="y0" value="21.6362" readonly><label class="half" for="y2">Y/2</label><input id="y2" value="0" readonly><svg><use href="#i-lo"/></svg>
                <label for="z0">Z0</label><input id="z0" value="-160.5125" readonly><label class="half" for="z2">Z/2</label><input id="z2" value="0" readonly><svg><use href="#i-lo"/></svg>
            </div>
            <div class="units">
                <div class="combo"><select class="en" aria-label="坐标系"><option>MCS</option></select><svg class="chev"><use href="#i-chev"/></svg></div>
                <div class="combo"><svg class="pre"><use href="#i-cart"/></svg><select aria-label="坐标类型"><option>笛卡尔</option></select><svg class="chev"><use href="#i-chev"/></svg></div>
                <div class="combo"><svg class="pre"><use href="#i-ruler"/></svg><select aria-label="长度单位"><option>毫米</option></select><svg class="chev"><use href="#i-chev"/></svg></div>
                <div class="combo"><svg class="pre"><use href="#i-deg"/></svg><select aria-label="角度单位"><option>度</option></select><svg class="chev"><use href="#i-chev"/></svg></div>
            </div>
        </section>
    </div>

    <div class="lower">
        <aside class="left">
            <section class="panel program">
                <h2>测量程序<svg class="float"><use href="#i-float"/></svg></h2>
                <div class="tools run">
                    <button aria-label="运行"><svg><use href="#i-play"/></svg></button>
                    <button aria-label="暂停"><svg><use href="#i-pause"/></svg></button>
                    <button aria-label="快进"><svg><use href="#i-ff"/></svg></button>
                    <button aria-label="停止"><svg><use href="#i-stop"/></svg></button>
                    <button aria-label="锁定"><svg><use href="#i-lock"/></svg></button>
                    <button aria-label="列表"><svg><use href="#i-list"/></svg></button>
                    <button aria-label="展开"><svg><use href="#i-expand"/></svg></button>
                </div>
                <table class="steps">
                    <colgroup><col class="c-mark"><col><col class="c-note"></colgroup>
                    <thead><tr><th></th><th>步骤</th><th>说明</th></tr></thead>
                    <tbody>
                        <tr><td></td><td><div class="node l0"><i class="open"></i><span>程序</span></div></td><td></td></tr>
                        <tr><td></td><td><div class="node l1"><i class="open"></i><span><svg><use href="#i-sub"/></svg>Main</span></div></td><td></td></tr>
                        <tr><td></td><td><div class="node l2"><i></i><span><svg><use href="#i-circle"/></svg>Cir1</span></div></td><td>影像1_0.7X</td></tr>
                        <tr class="selected"><td></td><td><div class="node l2"><i></i><span><svg><use href="#i-circle"/></svg>Cir2</span></div></td><td>影像1_0.7X</td></tr>
                        <tr><td></td><td><div class="node l2"><i></i><span><svg><use href="#i-line"/></svg>Lin1</span></div></td><td>影像1_0.7X</td></tr>
                        <tr><td></td><td><div class="node l2"><i></i><span><svg><use href="#i-line"/></svg>Lin2</span></div></td><td>影像1_0.7X</td></tr>
                        <tr><td></td><td><div class="node l2"><i></i><span><svg><use href="#i-dist"/></svg>Dis1</span></div></td><td>构造</td></tr>
                        <tr><td></td><td><div class="node l2"><i></i><span><svg><use href="#i-line"/></svg>Lin3</span></div></td><td>影像1_0.7X</td></tr>
                        <tr><td></td><td><div class="node l2"><i></i><span><svg><use href="#i-line"/></svg>Lin4</span></div></td><td>影像1_0.7X</td></tr>
                        <tr><td></td><td><div class="node l2"><i></i><span><svg><use href="#i-dist"/></svg>Dis2</span></div></td><td>构造</td></tr>
                        <tr><td></td><td><div class="node l2"><i></i><span><svg><use href="#i-line"/></svg>Lin5</span></div></td><td>影像1_0.7X</td></tr>
                        <tr><td></td><td><div class="node l2"><i></i><span><svg><use href="#i-line"/></svg>Lin6</span></div></td><td>影像1_0.7X</td></tr>
                        <tr><td></td><td><div class="node l2"><i></i><span><svg><use href="#i-dist"/></svg>Dis3</span></div></td><td>构造</td></tr>
                        <tr><td></td><td><div class="node l2"><i></i><span><svg><use href="#i-parallel"/></svg>Par1</span></div></td><td></td></tr>
                        <tr><td></td><td><div class="node l2"><svg class="cursor" viewBox="0 0 60 23"><path d="M4 0V23M4 11H14" stroke="#bbb" stroke-width="2"/><path d="M18 11H44" stroke="#0a9cf5" stroke-width="2"/><path d="M43 5 57 11 43 17Z" fill="#0a9cf5"/></svg></div></td><td class="to-right"><svg class="cursor" viewBox="0 0 40 23"><path d="M12 11H38" stroke="#0a9cf5" stroke-width="2"/><path d="M14 5 0 11 14 17Z" fill="#0a9cf5"/></svg></td></tr>
                        <tr><td></td><td><div class="node l2"><i class="open"></i><span><svg><use href="#i-out"/></svg>输出1</span></div></td><td></td></tr>
                        <tr><td></td><td><div class="node l3"><i class="elbow"></i><span><svg><use href="#i-excel"/></svg>输出Excel1</span></div></td><td></td></tr>
                    </tbody>
                </table>
                <div class="detail">
                    <ul>
                        <li class="root"><i class="open"></i><svg><use href="#i-circle"/></svg>Cir2</li>
                        <li><i class="tee"></i><svg><use href="#i-darc"/></svg>影像采集弧4</li>
                        <li><i class="tee"></i><svg><use href="#i-darc"/></svg>影像采集弧5</li>
                    </ul>
                    <div class="scroll"><div class="thumb"></div></div>
                </div>
                <div class="tabs"><button class="active">测量程序</button><button>测量视图</button></div>
            </section>

            <section class="panel light">
                <h2>光源控制<svg class="float"><use href="#i-float"/></svg></h2>
                <div class="light-body">
                    <div class="ring-side">
                        <svg class="ring" viewBox="0 0 197 186">
                            <rect x=".5" y=".5" width="196" height="185" fill="#252527" stroke="#9a45c4"/>
                            <path d="M3 1H28V28H3ZM169 1H194V28H169Z" fill="#2a2a2e" stroke="none"/>
                            <circle cx="98" cy="92.500" r="92" fill="#000" stroke="#a44ad0"/>
                            <circle cx="98" cy="92.500" r="25.500" fill="none" stroke="#b44ee0"/>
                            <path d="M27 6C18 6 14 10 14 16H19L11 26 5 16H9C9 10 15 5 27 6Z" fill="#174a86" stroke="none"/>
                            <path d="M172 6C181 6 185 10 185 16H180L188 26 194 16H190C190 10 184 5 172 6Z" fill="#174a86" stroke="none"/>
                        </svg>
                        <div class="segs">
                            <button class="on" aria-label="整环"><svg><use href="#i-seg1"/></svg></button>
                            <button aria-label="八分"><svg><use href="#i-seg8"/></svg></button>
                            <button aria-label="四分"><svg><use href="#i-seg4"/></svg></button>
                            <button aria-label="多环"><svg><use href="#i-seg16"/></svg></button>
                        </div>
                    </div>
                    <div class="light-side">
                        <div class="modes">
                            <button aria-label="环形光"><svg><use href="#i-ringa"/></svg></button>
                            <button aria-label="中心光"><svg><use href="#i-ringb"/></svg></button>
                            <button aria-label="点光"><svg><use href="#i-ringc"/></svg></button>
                            <span class="blank"></span>
                            <button aria-label="自动"><svg><use href="#i-auto"/></svg></button>
                        </div>
                        <div class="levels">
                            <div class="level"><label for="s1">39</label><input id="s1" type="range" min="0" max="255" value="39"><svg><use href="#i-bulb"/></svg></div>
                            <div class="level"><label for="s2">0</label><input id="s2" type="range" min="0" max="255" value="0"><svg><use href="#i-bulbd"/></svg></div>
                            <div class="level"><label for="s3">0</label><input id="s3" type="range" min="0" max="255" value="0"><svg><use href="#i-coax"/></svg></div>
                        </div>
                        <div class="switches">
                            <button aria-label="激光"><svg><use href="#i-laser"/></svg></button>
                            <button aria-label="电源"><svg><use href="#i-power"/></svg></button>
                        </div>
                    </div>
                </div>
                <div class="tabs"><button class="active">光源控制</button><button>运动控制</button><button>旋转控制</button></div>
            </section>
        </aside>

        <div class="views">
            <section class="panel camera">
                <div class="tabs top"><button class="active">影像窗口</button><button>复测窗口</button></div>
                <div class="camera-view">
                    <svg class="scene" viewBox="345 182 823 555" preserveAspectRatio="xMidYMid slice">
                        <rect x="345" y="182" width="823" height="555" fill="#4d4d4d"/>
                        <rect x="387" y="182" width="739" height="555" fill="#000"/>
                        <path d="M1037 182A1441 1441 0 0 0 750 737H1126V182Z" fill="#fff"/>
                        <path d="M1037 182A1441 1441 0 0 0 750 737" fill="none" stroke="#e8601c" stroke-width="2"/>
                        <path d="M1123 329h2v2h-2ZM1059 386h1v1h-1ZM899 570h1v1h-1ZM991 508h1v1h-1ZM1020 629h1v1h-1ZM882 699h1v1h-1ZM943 357h1v1h-1Z" fill="#5a6a90"/>
                        <path d="M345 459.500H1168M756.500 182V737M837 452 856 459.500 837 467" fill="none" stroke="#18d818"/>
                        <text x="755" y="359" class="axis">Y</text>
                        <text x="882" y="459" class="axis">X</text>
                    </svg>
                    <div class="readout">L:0.7X---M:18.79<br>X=0.006460mm<br>Y=0.006454mm</div>
                    <div class="view-bar">
                        <div class="combo"><select aria-label="影像"><option>影像1</option></select><svg class="chev"><use href="#i-chev"/></svg></div>
                        <div class="combo"><select class="en" aria-label="倍率"><option>0.7X</option></select><svg class="chev"><use href="#i-chev"/></svg></div>
                        <button aria-label="适应"><svg><use href="#i-fit"/></svg></button>
                        <button aria-label="1:1"><svg><use href="#i-one"/></svg></button>
                        <button aria-label="锁定"><svg><use href="#i-lock"/></svg></button>
                    </div>
                </div>
            </section>

            <section class="panel model">
                <h2>3D视图<svg class="float"><use href="#i-float"/></svg></h2>
                <div class="model-bar">
                    <button aria-label="平移"><svg><use href="#i-wheel"/></svg></button>
                    <button aria-label="自动"><svg><use href="#i-auto"/></svg></button>
                    <button class="on" aria-label="投影"><svg><use href="#i-door"/></svg></button>
                </div>
                <svg class="scene" viewBox="1173 203 739 508">
                    <circle cx="1543" cy="457.500" r="254.500" fill="none" stroke="#18e018"/>
                    <circle cx="1543" cy="457" r="77" fill="none" stroke="#e8601c" stroke-width="2"/>
                    <path d="M1516.500 392 1569 522M1506 391 1524 384M1562 530 1580 524" stroke="#35e8ec" stroke-width="1.200"/>
                    <path d="M1504 388 1508 395 1511 394M1523 381 1526 387 1514 392M1511 394 1514 392M1564 533 1561 527 1577 519 1581 526M1505 391 1506 393" fill="none" stroke="#18e018"/>
                    <path d="M1461 422.500H1476M1468.500 415V430" stroke="#fff"/>
                </svg>
                <div class="tabs"><button class="active">3D视图</button><button>导航视图</button><button>拼拍地图</button><button>CAD模型窗口</button><button>输出视图</button><button>工件结果视图</button><button>轮廓度视图</button><button>阵列测量视图</button><button>点云视图</button><button>形状公差视图</button></div>
            </section>
        </div>

        <div class="bottom">
            <section class="panel info">
                <h2>元素信息<svg class="float"><use href="#i-float"/></svg></h2>
                <form class="fields">
                    <label for="f-name">名称</label><input id="f-name" value="Cir2" disabled>
                    <label for="f-id" class="en">ID</label><input id="f-id" value="30" disabled>
                    <label for="f-type">类型</label><input id="f-type" class="zh" value="圆" disabled>
                    <label for="f-cs">参考坐标系</label><input id="f-cs" value="MCS" disabled>
                </form>
                <table class="values">
                    <colgroup><col class="c-no"><col class="c-item"><col class="c-num"><col class="c-num"><col class="c-num"><col class="c-num"><col class="c-num"><col class="c-num"><col></colgroup>
                    <thead><tr><td class="corner"></td><th>项目</th><th>尺寸号</th><th>测量值</th><th>标准值</th><th>偏差</th><th>上公差</th><th>下公差</th><td class="fill"></td></tr></thead>
                    <tbody>
                        <tr><th>1</th><td>X坐标</td><td>X坐标</td><td>177.8139</td><td>177.8140</td><td>-0.0001</td><td>0.0500</td><td>-0.0500</td></tr>
                        <tr><th>2</th><td>Y坐标</td><td>Y坐标</td><td>12.6341</td><td>12.6327</td><td>0.0014</td><td>0.0500</td><td>-0.0500</td></tr>
                        <tr><th>3</th><td>Z坐标</td><td>Z坐标</td><td>-160.5125</td><td>-160.5125</td><td>0.0000</td><td>0.0500</td><td>-0.0500</td></tr>
                        <tr><th>4</th><td>半径</td><td>半径</td><td>19.9948</td><td>19.9947</td><td>0.0001</td><td>0.0500</td><td>-0.0500</td></tr>
                        <tr><th>5</th><td>直径</td><td>直径</td><td>39.9896</td><td>39.9894</td><td>0.0001</td><td>0.0500</td><td>-0.0500</td></tr>
                    </tbody>
                </table>
                <div class="tabs"><button class="active">元素信息</button><button>系统消息</button></div>
            </section>

            <section class="panel result">
                <h2>测量结果<svg class="float"><use href="#i-float"/></svg></h2>
                <div class="result-body">
                    <div class="counts">
                        <span>检查数量<b>: 7</b></span><span>不良数量<b>: 0</b></span>
                        <span>良品数量<b>: 7</b></span><span class="rate">良品率<b>: 100.00%</b></span>
                    </div>
                    <p class="verdict">OK</p>
                </div>
            </section>
        </div>
    </div>
</main>

<footer class="status">
    <span>选择元素: 1</span>
    <span class="log en">[2025-02-12 10:09:14.518][info][<span class="zh">欧姆龙</span>ZW7000 WriteNet:]MS 4</span>
    <span class="en">0day(s) 0:1:50.543/10:05-10:07</span>
    <span>程序执行次数<span class="en">: 5 / 5</span></span>
    <button>寻边参数设置</button>
</footer>

<div class="taskbar">
    <button aria-label="开始"><svg viewBox="0 0 16 16"><path d="M0 2 7 1V7.500H0ZM8 1 16 0V7.500H8ZM0 8.500H7V15L0 14ZM8 8.500H16V16L8 15Z" fill="#fff"/></svg></button>
    <button class="app" aria-label="Edge"><svg viewBox="0 0 24 24"><circle cx="12" cy="12" r="12" fill="url(#g-edge)"/><path d="M1 10C5 4 14 5 16 11 16 14 13 14 14 16 17 19 22 17 23 15 20 24 8 26 5 16 5 12 8 9 12 9 8 6 4 7 1 10Z" fill="#0e5fb0"/><path d="M9 14C9 10 13 9 15 12 15 14 13 14 14 16 16 18 20 18 22 16 15 22 9 20 9 14Z" fill="#9fdcf5" opacity=".8"/></svg></button>
    <button class="app current" aria-label="PolyGauge"><svg><use href="#i-logo"/></svg></button>
    <button class="app running" aria-label="Excel"><svg viewBox="0 0 24 24"><path d="M2 3 6 0H20V18H2Z" fill="#d8ecc0" stroke="#4c9a3c"/><path d="M10 8H23V22H10Z" fill="#fff" stroke="#5a9a4c"/><path d="M10 13H23M10 17H23M16 8V22" stroke="#5a9a4c"/><path d="M5 5 13 14M13 5 5 14" stroke="#1f6a2c" stroke-width="3"/></svg></button>
    <div class="tray">
        <svg viewBox="0 0 18 18"><path d="M4 12 9 6 14 12" fill="none" stroke="#fff" stroke-width="1.300"/></svg>
        <svg viewBox="0 0 18 18"><g fill="none" stroke="#fff"><circle cx="8" cy="8" r="7"/><path d="M1 8H15M8 1V15M3 4H13M3 12H9M8 1C4 5 4 11 8 15M8 1C12 5 12 8 12 9"/></g><circle cx="13" cy="13" r="4" fill="#2b3230" stroke="#fff"/><path d="M10 10 16 16" stroke="#fff"/></svg>
        <svg viewBox="0 0 18 18"><path d="M2 7H4L8 3V15L4 11H2Z" fill="none" stroke="#fff"/><path d="M11 7C12 8 12 10 11 11" fill="none" stroke="#fff"/><path d="M13 5C15 8 15 10 13 13M15 3C18 7 18 11 15 15" fill="none" stroke="#889"/></svg>
        <span class="ime">英</span>
        <span class="pin">拼</span>
        <span class="clock">10:09<br>2025/2/12</span>
        <span class="notice"><svg viewBox="0 0 22 22"><path d="M2 1H20V16H10L6 20V16H2Z" fill="#fff"/><path d="M5 5H17M5 8H17M5 11H13" stroke="#2b3230"/></svg><em>4</em></span>
    </div>
</div>
</body>
</html>
```
FILE: styles.css
```
* {
    box-sizing: border-box;
}
body {
    margin: 0;
    height: 100vh;
    min-height: 960px;
    min-width: 1500px;
    display: flex;
    flex-direction: column;
    background-color: #24262f;
    color: #fff;
    font-family: "Liberation Mono", "Noto Sans CJK SC", monospace;
    font-size: 15px;
    line-height: 18px;
}
h1, h2, p, ul {
    margin: 0;
    padding: 0;
}
button, input, select {
    font: inherit;
    color: inherit;
    margin: 0;
    padding: 0;
    border: 0;
    border-radius: 0;
    background: none;
}
svg {
    display: block;
    flex: none;
    fill: none;
    stroke: #1c98e0;
    stroke-width: 1.6;
}
.defs {
    position: absolute;
    width: 0;
    height: 0;
}
.sprite {
    display: none;
}
.en {
    font-family: "Liberation Mono", monospace;
    font-size: 13px;
}
.zh {
    font-family: "Noto Sans CJK SC", sans-serif;
    font-size: 15px;
}
/* Textos dentro de los iconos */
.t-serif, .t-xy, .t-a, .t-one, .t-lo {
    stroke: none;
    fill: #ddd;
    font: 14px "Liberation Serif", serif;
}
.t-xy {
    fill: #1b80c8;
    font: bold 11px "Liberation Sans", sans-serif;
}
.t-a {
    fill: #fff;
    font: bold 14px "Liberation Sans", sans-serif;
}
.t-one {
    fill: #5ab8e8;
    font: bold 10px "Liberation Sans", sans-serif;
}
.t-lo {
    font: bold 8px "Liberation Serif", serif;
}

/* Barra de título */
.titlebar {
    display: grid;
    grid-template-columns: 1055fr auto 642fr;
    grid-template-areas: "menu title buttons";
    align-items: center;
    height: 34px;
    padding: 0 12px 0 4px;
    border-top: 1px solid #05060a;
}
.logo {
    grid-area: menu;
    width: 30px;
    height: 28px;
}
.menu {
    grid-area: menu;
    display: flex;
    gap: 17px;
    padding-left: 40px;
    font-family: "Open Sans", "Noto Sans CJK SC", sans-serif;
}
.menu a {
    color: #fff;
    text-decoration: none;
}
.titlebar h1 {
    grid-area: title;
    padding-top: 4px;
    font-size: 14px;
    font-weight: bold;
}
.window-buttons {
    grid-area: buttons;
    display: flex;
    justify-content: flex-end;
    align-items: center;
    gap: 16px;
}
.user {
    padding-top: 4px;
    font-size: 13px;
    font-weight: bold;
    margin-right: -8px;
}
.win {
    width: 14px;
    height: 14px;
    stroke: #fff;
    stroke-width: 2;
}

/* Paneles */
.workspace {
    flex: 1;
    min-height: 0;
    display: flex;
    flex-direction: column;
    gap: 3px;
    padding: 0 4px;
}
.top-row {
    display: grid;
    grid-template-columns: 338px 528fr 292fr 421fr 320fr;
    gap: 3px;
    background-color: #525b67;
    box-shadow: 0 3px #525b67;
}
.panel {
    display: flex;
    flex-direction: column;
    min-width: 0;
    min-height: 0;
    background-color: #2d2c31;
}
.panel h2 {
    display: flex;
    justify-content: space-between;
    align-items: center;
    flex: none;
    height: 18px;
    padding: 3px 6px 0 5px;
    background-color: #007acc;
    font-size: 15px;
    font-weight: normal;
}
.float {
    width: 13px;
    height: 12px;
    stroke: #0b2a4a;
}
.tools {
    display: flex;
    flex-wrap: wrap;
    align-content: flex-start;
    column-gap: 5px;
    row-gap: 7px;
    padding-top: 1px;
}
.tools button {
    width: 26px;
    height: 24px;
}
.tools svg {
    width: 26px;
    height: 24px;
}
.measure {
    flex: 1;
}
.second {
    flex: 0 0 51px;
    border-top: 3px solid #525b67;
}
.tabs {
    display: flex;
    flex: none;
    gap: 1px;
    height: 26px;
    margin-top: auto;
    padding-left: 1px;
    border-top: 1px solid #a0a0a0;
}
.tabs button {
    height: 25px;
    padding: 4px 1px 0;
    border: 1px solid #18181a;
    border-top-left-radius: 5px;
    border-top-right-radius: 5px;
    background-color: #222124;
    color: #c8c8c8;
    white-space: nowrap;
}
.tabs .active {
    background-color: #cfcfcf;
    border-color: #cfcfcf;
    color: #1878b8;
}

/* Posición de la máquina */
.axes {
    display: grid;
    grid-template-columns: 35px 121fr 48px 95fr 20px;
    grid-auto-rows: 26px;
    align-items: center;
    font-family: "DejaVu Sans Mono", monospace;
    font-size: 13px;
    text-align: center;
}
.axes input {
    width: 100%;
    height: 25px;
    padding-right: 5px;
    border: 1px solid #eee;
    font: 16px "Liberation Mono", monospace;
    text-align: right;
}
.half {
    align-self: stretch;
    padding-top: 4px;
    border-right: 3px solid #525b67;
}
.axes svg {
    width: 16px;
    height: 20px;
    margin-left: 2px;
}
.units {
    display: grid;
    grid-template-columns: 62fr 90fr 75fr 90fr;
    gap: 1px;
}
.combo {
    display: flex;
    align-items: center;
    height: 22px;
    padding: 0 3px;
    border: 1px solid #b0b0b0;
    background-color: #e1e1e1;
    color: #000;
}
.combo select {
    flex: 1;
    min-width: 0;
    padding-top: 2px;
    appearance: none;
}
.chev {
    width: 10px;
    height: 10px;
}
.pre {
    width: 16px;
    height: 16px;
    margin-right: 4px;
}

/* Zona inferior */
.lower {
    flex: 1;
    min-height: 0;
    display: grid;
    grid-template-columns: 338px 1fr;
    grid-template-rows: 1fr auto;
    gap: 4px 3px;
    margin-right: 3px;
    background-color: #525b67;
}
.left {
    grid-row: 1 / 3;
    display: flex;
    flex-direction: column;
    gap: 4px;
    min-height: 0;
}
.views {
    display: grid;
    grid-template-columns: 823fr 741fr;
    gap: 4px;
    min-height: 0;
}
.bottom {
    display: grid;
    grid-template-columns: 1281fr 283fr;
    gap: 4px;
}
.program {
    flex: 1;
}
.run {
    padding: 1px 0 2px;
}
.steps {
    width: 335px;
    margin: 0;
    table-layout: fixed;
    border-collapse: collapse;
    font-family: "Open Sans", "Noto Sans CJK SC", sans-serif;
}
.c-mark {
    width: 30px;
}
.c-note {
    width: 106px;
}
.steps th, .values th {
    padding: 0 3px;
    border: 1px solid #ddd;
    background: linear-gradient(#3a393e, #5c5b62);
    font-weight: normal;
    text-align: left;
}
.steps th {
    height: 24px;
}
.steps td {
    height: 23px;
    padding: 0;
    color: #eee;
}
.steps td + td {
    border-right: 1px solid #ddd;
}
.steps td:last-child {
    padding-left: 3px;
}
.node {
    display: flex;
    align-items: center;
    height: 23px;
}
.l0 { padding-left: 4px; }
.l1 { padding-left: 24px; }
.l2 { padding-left: 44px; }
.l3 { padding-left: 67px; }
.node i {
    flex: none;
    width: 9px;
    height: 12px;
    margin-right: 6px;
    background-color: #2ea0f0;
    clip-path: polygon(0 0, 90% 50%, 0 100%);
}
.node .open, .detail .open {
    height: 9px;
    background-color: #2ea0f0;
    clip-path: polygon(100% 0, 100% 100%, 0 100%);
}
.node .elbow {
    width: 12px;
    height: 12px;
    margin: 0 0 12px 0;
    border-left: 2px solid #aaa;
    border-bottom: 2px solid #aaa;
    background: none;
    clip-path: none;
}
.node span {
    display: flex;
    flex: 1;
    align-items: center;
    gap: 6px;
    height: 22px;
    padding-left: 4px;
}
.node span svg {
    width: 15px;
    height: 15px;
    stroke-width: 2;
}
.selected span, .selected td:last-child {
    background-color: #0078d7;
    color: #10141c;
}
.node .cursor {
    width: 60px;
    height: 23px;
    stroke: none;
}
.to-right .cursor {
    width: 40px;
    height: 23px;
    margin-left: auto;
    stroke: none;
}
.detail {
    display: flex;
    height: 85px;
    margin-top: auto;
    border-top: 3px solid #fff;
    font-family: "Open Sans", "Noto Sans CJK SC", sans-serif;
    overflow: hidden;
}
.detail + .tabs {
    margin-top: 0;
}
.detail ul {
    flex: 1;
    list-style: none;
    border-right: 1px solid #ddd;
}
.detail li {
    display: flex;
    align-items: center;
    height: 26px;
    padding-left: 29px;
}
.detail .root {
    padding-left: 6px;
}
.detail li svg {
    width: 16px;
    height: 16px;
    margin-right: 6px;
}
.detail .open {
    width: 9px;
    margin-right: 9px;
}
.tee {
    width: 11px;
    height: 26px;
    margin-right: 4px;
    border-left: 2px solid #aaa;
    background: linear-gradient(#aaa, #aaa) 0 12px / 100% 2px no-repeat;
}
.scroll {
    width: 12px;
    margin-left: 2px;
    padding-top: 16px;
    background-color: #eee;
}
.thumb {
    height: 37px;
    border: 1px solid #111;
    border-radius: 3px;
    background-color: #b0b0b0;
}

/* Control de luz */
.light-body {
    display: grid;
    grid-template-columns: 197px 1fr;
    height: 215px;
}
.ring {
    width: 197px;
    height: 186px;
    stroke-width: 1;
}
.segs {
    display: flex;
    padding: 1px;
    background-color: #242630;
}
.segs button {
    display: grid;
    place-items: center;
    width: 27px;
    height: 27px;
    background-color: #2d2c31;
}
.segs svg {
    width: 23px;
    height: 23px;
}
.segs .on, .model-bar .on {
    background-color: #c08a30;
}
.light-side {
    display: grid;
    grid-template-columns: 34px 1fr;
    grid-template-rows: 184px 31px;
}
.modes {
    display: flex;
    flex-direction: column;
    align-items: center;
    padding-top: 2px;
}
.modes button {
    height: 31px;
}
.modes svg {
    width: 26px;
    height: 26px;
}
.blank {
    flex: 1;
    align-self: stretch;
    margin: 0 1px 1px;
    background-color: #242630;
}
.levels {
    display: flex;
    justify-content: space-around;
    padding-right: 3px;
}
.level {
    display: flex;
    flex-direction: column;
    align-items: center;
    width: 34px;
    font: bold 13px/14px "Liberation Sans", sans-serif;
}
.level label {
    padding-right: 8px;
}
.level input {
    width: 21px;
    height: 140px;
    appearance: none;
    writing-mode: vertical-lr;
    direction: rtl;
    background: linear-gradient(#e8e8e8, #e8e8e8) center / 4px 100% no-repeat;
}
.level input::-webkit-slider-thumb {
    appearance: none;
    width: 21px;
    height: 10px;
    background-color: #0078d7;
}
.level svg {
    width: 26px;
    height: 24px;
    margin-top: 3px;
}
.switches {
    grid-column: 1 / 3;
    display: flex;
    justify-content: center;
    gap: 34px;
}
.switches svg {
    width: 24px;
    height: 24px;
}

/* Vista de cámara */
.tabs.top {
    height: 27px;
    margin: 0;
    padding-top: 1px;
    border-top: 0;
    border-bottom: 1px solid #a0a0a0;
}
.camera-view {
    position: relative;
    display: flex;
    flex-direction: column;
    flex: 1;
    min-height: 0;
}
.scene {
    flex: 1;
    width: 100%;
    min-height: 0;
    stroke: none;
    stroke-width: 1;
}
.axis {
    fill: #18d818;
    font: 14px "Liberation Sans", sans-serif;
}
.readout {
    position: absolute;
    top: 5px;
    left: 5px;
    color: #0000c0;
    font: 16px/20px "Liberation Sans", sans-serif;
}
.view-bar {
    position: absolute;
    top: 0;
    right: 0;
    display: grid;
    grid-template-columns: 79px 79px 20px 20px 20px;
    column-gap: 2px;
    padding-right: 2px;
    background-color: #2d2c31;
}
.view-bar .combo {
    height: 19px;
}
.view-bar button svg {
    width: 20px;
    height: 19px;
}
.model-bar {
    display: flex;
    flex: none;
    height: 29px;
    padding: 1px 0;
    background-color: #242630;
}
.model-bar button {
    display: grid;
    place-items: center;
    width: 27px;
    height: 27px;
}
.model-bar svg {
    width: 22px;
    height: 22px;
}
.model .scene {
    border: 1px solid #8a9098;
    background-color: #4d4d4d;
}
.model .tabs button {
    flex: 1 1 auto;
    padding: 4px 0 0;
    overflow: hidden;
    border-width: 1px 0;
}

/* Información del elemento */
.fields {
    display: flex;
    align-items: center;
    gap: 6px;
    padding: 10px 8px 6px;
}
.fields label {
    padding-top: 3px;
}
.fields input {
    width: 142px;
    height: 20px;
    padding: 0 2px;
    border: 1px solid #666;
    border-radius: 4px;
    background-color: #7b7b7b;
    color: #b4b4b4;
    font-size: 13px;
}
.values {
    margin: 0 9px 13px 8px;
    table-layout: fixed;
    border-collapse: collapse;
    font-family: "Open Sans", "Noto Sans CJK SC", sans-serif;
}
.c-no { width: 28px; }
.c-item { width: 50px; }
.c-num { width: 85px; }
.values thead th {
    height: 26px;
    text-align: center;
}
.values .corner {
    background-color: #fff;
}
.values .fill {
    background-color: #8080c8;
    border: 0;
}
.values tbody th {
    vertical-align: bottom;
}
.values tbody td {
    height: 30px;
    padding: 0 4px 3px 3px;
    border-right: 1px solid #eee;
    border-bottom: 1px solid #232226;
    color: #eee;
    text-align: right;
}
.values tbody td:nth-child(2), .values tbody td:nth-child(3) {
    text-align: left;
    white-space: nowrap;
}
.result-body {
    flex: 1;
    padding: 11px 28px 0 32px;
    border: 1px solid #15161c;
    background-color: #242630;
}
.counts {
    display: grid;
    grid-template-columns: auto 1fr;
    column-gap: 6px;
    row-gap: 5px;
    color: #18e018;
    white-space: nowrap;
}
.counts b {
    font-size: 13px;
    font-weight: normal;
}
.rate {
    padding-left: 14px;
}
.verdict {
    margin-top: 64px;
    color: #0000ff;
    font-family: "Liberation Serif", serif;
    font-size: 52px;
    font-weight: bold;
    line-height: 56px;
    text-align: center;
}

/* Barra de estado */
.status {
    display: flex;
    align-items: center;
    gap: 8px;
    flex: none;
    height: 29px;
    padding: 0 4px 2px 6px;
    border-bottom: 2px solid #0a0b0d;
    background-color: #212121;
    white-space: nowrap;
}
.status > span, .status button {
    padding-top: 3px;
}
.status .log {
    flex: 1;
    padding-top: 0;
    color: #2a86d8;
}
.status button {
    padding-left: 10px;
    padding-right: 10px;
    height: 20px;
    background-color: #2d2c31;
}

/* Barra de tareas */
.taskbar {
    display: flex;
    flex: none;
    height: 40px;
    background: linear-gradient(90deg, #292e2d, #2b3230 60%, #353d3a);
    font-family: "Open Sans", "Noto Sans CJK SC", sans-serif;
}
.taskbar svg {
    stroke: none;
    stroke-width: 1;
}
.taskbar button {
    display: grid;
    place-items: center;
    width: 49px;
}
.taskbar button svg {
    width: 16px;
    height: 16px;
}
.taskbar .app {
    width: 51px;
    border-bottom: 2px solid transparent;
}
.taskbar .app svg {
    width: 24px;
    height: 24px;
}
.taskbar .current {
    width: 48px;
    background-color: #555a59;
    border-color: #76b9ed;
}
.taskbar .running {
    width: 40px;
    margin-left: 5px;
    border-color: #76b9ed;
}
.tray {
    display: flex;
    align-items: center;
    gap: 6px;
    margin-left: auto;
    padding-right: 22px;
}
.tray svg {
    width: 18px;
    height: 18px;
}
.ime {
    font-size: 16px;
}
.pin {
    width: 15px;
    height: 16px;
    margin: 0 13px 0 9px;
    background-color: #fff;
    color: #111;
    font-size: 13px;
    line-height: 16px;
    text-align: center;
}
.clock {
    margin-right: 12px;
    font-size: 12px;
    line-height: 19px;
    text-align: center;
}
.notice {
    position: relative;
}
.notice svg {
    width: 20px;
    height: 20px;
}
.notice em {
    position: absolute;
    left: 8px;
    top: 8px;
    width: 16px;
    height: 16px;
    border: 1px solid #aaa;
    border-radius: 8px;
    background-color: #2b3230;
    font-size: 12px;
    font-style: normal;
    line-height: 14px;
    text-align: center;
}
```
